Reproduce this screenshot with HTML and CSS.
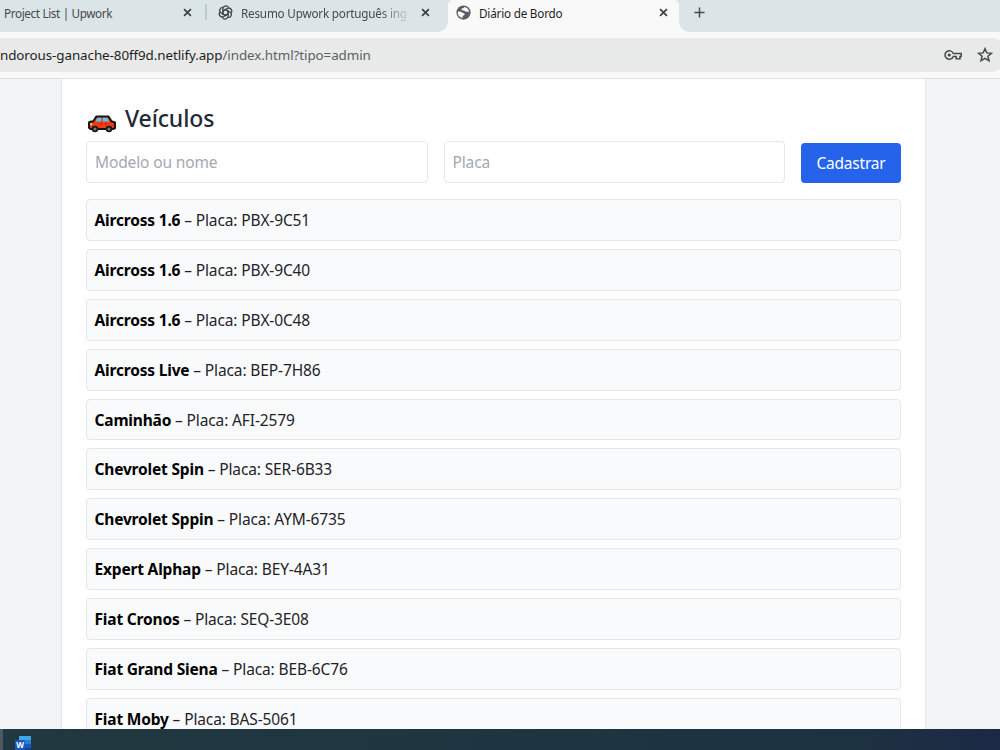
FILE: index.html
```html
<!DOCTYPE html>
<html lang="pt-BR">
<head>
  <meta charset="UTF-8">
  <meta name="viewport" content="width=device-width, initial-scale=1.0">
  <title>Diário de Bordo</title>
  <link rel="stylesheet" href="styles.css">
</head>
<body>
  <!-- Abas -->
  <div class="tabs">
    <div class="tab tab-upwork">
      <span class="tab-title upwork-title">Project List | Upwork</span>
      <svg class="close" viewBox="0 0 10 10"><path d="M1.2 1.2l7.6 7.6M8.8 1.2L1.2 8.8"/></svg>
    </div>
    <div class="tab tab-resumo">
      <svg class="tab-icon gpt" viewBox="0 0 16 16">
        <path d="M5.2 9.6V4.2a3.2 3.2 0 0 1 6-1.5"/>
        <path d="M5.2 9.6V4.2a3.2 3.2 0 0 1 6-1.5" transform="rotate(60 8 8)"/>
        <path d="M5.2 9.6V4.2a3.2 3.2 0 0 1 6-1.5" transform="rotate(120 8 8)"/>
        <path d="M5.2 9.6V4.2a3.2 3.2 0 0 1 6-1.5" transform="rotate(180 8 8)"/>
        <path d="M5.2 9.6V4.2a3.2 3.2 0 0 1 6-1.5" transform="rotate(240 8 8)"/>
        <path d="M5.2 9.6V4.2a3.2 3.2 0 0 1 6-1.5" transform="rotate(300 8 8)"/>
        <path d="M8 4.9l2.7 1.5v3.2L8 11.1 5.3 9.6V6.4z"/>
      </svg>
      <span class="tab-title resumo-title">Resumo Upwork português ing</span>
      <svg class="close" viewBox="0 0 10 10"><path d="M1.2 1.2l7.6 7.6M8.8 1.2L1.2 8.8"/></svg>
    </div>
    <div class="tab tab-active">
      <svg class="tab-icon" viewBox="0 0 16 16">
        <circle cx="8" cy="8" r="7.6" fill="#5a5e62"/>
        <path d="M2 7l3.3.2 2 1.4 1.6.3.2 1.7-1.8 1-.4 2.3-2.2-.8A6 6 0 0 1 2 7zM9.2 2.1l-1.4 1.4-2 .3.4 1.7 2.6.3 1.2 1.4 1.6-.4 2.3.7A6 6 0 0 0 9.2 2.1z" fill="#f9f9f9"/>
      </svg>
      <span class="tab-title active-title">Diário de Bordo</span>
      <svg class="close" viewBox="0 0 10 10"><path d="M1.2 1.2l7.6 7.6M8.8 1.2L1.2 8.8"/></svg>
    </div>
    <svg class="new-tab" viewBox="0 0 12 12"><path d="M6 .5v11M.5 6h11"/></svg>
  </div>

  <!-- Barra de endereço -->
  <div class="toolbar">
    <div class="address">
      <span class="url"><span class="host">ndorous-ganache-80ff9d.netlify.app</span>/index.html?tipo=admin</span>
      <svg class="key" viewBox="0 0 18 12">
        <path d="M9.3 4.5A4.3 4.3 0 1 0 9.3 7.5H12.2V9.7H16V7.5H17.2V4.5z"/>
        <circle cx="5.2" cy="6" r="1.6"/>
      </svg>
      <svg class="star" viewBox="0 0 16 16"><path d="M8 1.7l1.8 4.2 4.6.4-3.5 3 1.1 4.5L8 11.4l-4 2.4 1.1-4.5-3.5-3 4.6-.4z"/></svg>
    </div>
  </div>

  <main class="page">
    <div class="card">
      <h2 class="title">
        <svg class="car" viewBox="0 0 28 18">
          <path d="M3 6.5h2.2L8.3 1.5h12.2l3 4.8 3.5 1.2v5.8l-2 .7H2.5L1 12.7V7.5z" fill="#f03a17" stroke="#151515" stroke-width="2" stroke-linejoin="round"/>
          <path d="M9.5 2.8h3.7v3.7H7.3zM14.7 2.8h4.5l2 3.7h-6.5z" fill="#55c8f2"/>
          <path d="M2 8.2h2.2v2H2z" fill="#ffd43b"/>
          <path d="M12 9h2M17 9h2" stroke="#9c1d10"/>
          <circle cx="7" cy="14" r="2.4" fill="#777" stroke="#151515" stroke-width="1.7"/>
          <circle cx="21" cy="14" r="2.4" fill="#777" stroke="#151515" stroke-width="1.7"/>
        </svg>
        <span>Veículos</span>
      </h2>
      <form class="form">
        <input type="text" placeholder="Modelo ou nome">
        <input type="text" placeholder="Placa">
        <button type="button">Cadastrar</button>
      </form>
      <ul class="list">
        <li><strong>Aircross 1.6</strong> – Placa: PBX-9C51</li>
        <li><strong>Aircross 1.6</strong> – Placa: PBX-9C40</li>
        <li><strong>Aircross 1.6</strong> – Placa: PBX-0C48</li>
        <li><strong>Aircross Live</strong> – Placa: BEP-7H86</li>
        <li><strong>Caminhão</strong> – Placa: AFI-2579</li>
        <li><strong>Chevrolet Spin</strong> – Placa: SER-6B33</li>
        <li><strong>Chevrolet Sppin</strong> – Placa: AYM-6735</li>
        <li><strong>Expert Alphap</strong> – Placa: BEY-4A31</li>
        <li><strong>Fiat Cronos</strong> – Placa: SEQ-3E08</li>
        <li><strong>Fiat Grand Siena</strong> – Placa: BEB-6C76</li>
        <li><strong>Fiat Moby</strong> – Placa: BAS-5061</li>
      </ul>
    </div>
  </main>

  <!-- Barra de tarefas -->
  <footer class="taskbar">
    <svg class="word" viewBox="0 0 16 16">
      <path d="M4 0h12v4H4z" fill="#41a5ee"/>
      <path d="M4 4h12v4H4z" fill="#2b7cd3"/>
      <path d="M4 8h12v4H4z" fill="#185abd"/>
      <path d="M4 12h12v4H4z" fill="#103f91"/>
      <rect y="4" width="10" height="10" rx="1" fill="#185abd"/>
      <text x="5" y="12" text-anchor="middle">W</text>
    </svg>
  </footer>
</body>
</html>
```
FILE: styles.css
```css
* {
  box-sizing: border-box;
}
body {
  margin: 0;
  height: 750px;
  overflow: hidden;
  display: flex;
  flex-direction: column;
  font-family: "Noto Sans", "Open Sans", sans-serif;
  font-size: 15.5px;
  letter-spacing: -0.13px;
  color: #1f2329;
}

/* Abas */
.tabs {
  display: flex;
  flex: none;
  height: 32px;
  background: #dbe4e7;
}
.tab {
  display: flex;
  align-items: center;
  height: 25px;
  font-size: 11.7px;
  color: #454a4d;
  white-space: nowrap;
}
.tab-upwork {
  width: 207px;
  padding-left: 4px;
  padding-right: 15px;
  position: relative;
}
.upwork-title {
  letter-spacing: -0.35px;
}
.tab-upwork::after {
  content: "";
  position: absolute;
  right: 0;
  top: 4px;
  width: 2px;
  height: 16px;
  background: #b9cbd1;
}
.tab-resumo {
  width: 241px;
  padding-left: 11px;
  padding-right: 18px;
}
.tab-active {
  width: 231px;
  height: 32px;
  padding: 0 11px 7px 8px;
  background: #f9f9f9;
  border-radius: 5px 5px 0 0;
  color: #1f1f1f;
  position: relative;
}
.tab-active::before,
.tab-active::after {
  content: "";
  position: absolute;
  bottom: 0;
  width: 10px;
  height: 10px;
}
.tab-active::before {
  left: -10px;
  background: radial-gradient(circle at 0 0, transparent 9.5px, #f9f9f9 10px);
}
.tab-active::after {
  right: -10px;
  background: radial-gradient(circle at 100% 0, transparent 9.5px, #f9f9f9 10px);
}
.active-title {
  letter-spacing: -0.2px;
}
.tab-icon {
  width: 15px;
  height: 15px;
  margin-right: 8px;
  flex: none;
}
.gpt {
  fill: none;
  stroke: #3f4447;
  stroke-width: 1.4;
}
.resumo-title {
  width: 168px;
  letter-spacing: -0.2px;
  -webkit-mask-image: linear-gradient(to right, #000 138px, transparent 170px);
  mask-image: linear-gradient(to right, #000 138px, transparent 170px);
}
.close {
  width: 9px;
  height: 9px;
  margin-left: auto;
  flex: none;
  fill: none;
  stroke: #3c4043;
  stroke-width: 1.9;
}
.new-tab {
  width: 11px;
  height: 11px;
  margin: 7px 0 0 15px;
  fill: none;
  stroke: #45494c;
  stroke-width: 1.6;
}

/* Barra de endereço */
.toolbar {
  flex: none;
  height: 47px;
  padding: 6px 0 6px;
  background: #f9f9f9;
  border-bottom: 1px solid #dfe1e2;
}
.address {
  display: flex;
  align-items: center;
  height: 34px;
  margin-right: -8px;
  padding-right: 15px;
  background: #e8eae9;
  border-radius: 0 17px 17px 0;
}
.url {
  font-size: 13.4px;
  letter-spacing: -0.08px;
  color: #5c6063;
  flex: 1;
  white-space: nowrap;
}
.host {
  color: #1f1f1f;
}
.key {
  width: 18px;
  height: 12px;
  margin-right: 15px;
  fill: none;
  stroke: #45494c;
  stroke-width: 1.5;
}
.key circle {
  fill: #45494c;
  stroke: none;
}
.star {
  width: 16px;
  height: 16px;
  fill: none;
  stroke: #45494c;
  stroke-width: 1.5;
}

/* Conteúdo */
.page {
  flex: 1;
  min-height: 0;
  overflow: hidden;
  background: #f2f3f5;
}
.card {
  width: 863px;
  height: 700px;
  margin-left: 62px;
  padding: 21px 24px 0;
  background: #fff;
  box-shadow: 0 0 2px rgba(0, 0, 0, 0.15);
}
.title {
  display: flex;
  align-items: center;
  height: 36px;
  margin: 0 0 5px;
  font-size: 23px;
  font-weight: 500;
  color: #1f2937;
}
.car {
  width: 28px;
  height: 18px;
  margin: 11px 9px 0 2px;
}
.form {
  display: grid;
  grid-template-columns: 1fr 1fr 100px;
  column-gap: 16px;
  align-items: end;
}
.form input {
  width: 100%;
  height: 42px;
  padding: 0 8px 1px;
  border: 1px solid #e5e7eb;
  border-radius: 4px;
  font: inherit;
  letter-spacing: inherit;
}
.form input::placeholder {
  color: #a3a8b2;
}
.form button {
  height: 40px;
  padding: 0;
  border: none;
  border-radius: 4px;
  background: #2563eb;
  color: #fff;
  font: inherit;
  letter-spacing: -0.2px;
}
.list {
  list-style: none;
  margin: 16px 0 0;
  padding: 0;
}
.list li {
  height: 41.9px;
  margin-bottom: 8px;
  padding: 0 7.5px;
  border: 1px solid #e5e7eb;
  border-radius: 4px;
  background: #f9fafb;
  line-height: 41.4px;
}
.list strong {
  color: #000;
  letter-spacing: -0.18px;
}

/* Barra de tarefas */
.taskbar {
  flex: none;
  height: 21px;
  padding: 7px 0 0 12px;
  border-left: 3px solid #4a5a60;
  background: linear-gradient(to right, #213840, #1d3241 85%, #1b2945);
  overflow: hidden;
}
.word {
  width: 16px;
  height: 16px;
  display: block;
}
.word text {
  font: bold 8px "Open Sans", sans-serif;
  fill: #fff;
}
```
